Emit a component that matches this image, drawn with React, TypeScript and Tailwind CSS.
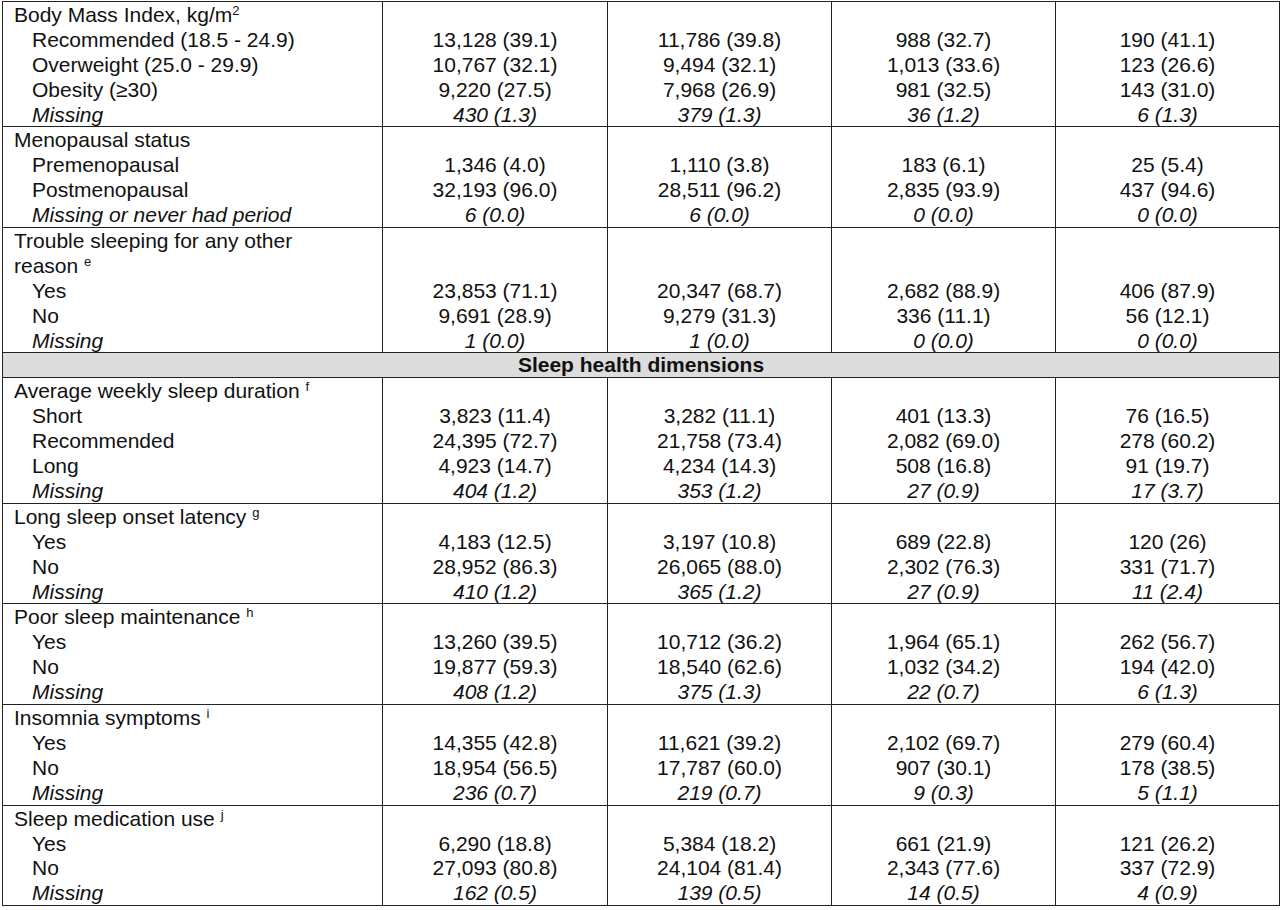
type Row = { label: string; values: string[]; missing?: boolean };
type Section = { title: React.ReactNode[]; rows: Row[] };

const Sup = ({ c }: { c: string }) => (
  <span className="align-[7px] text-[13px] leading-none">{c}</span>
);

const sections: Section[] = [
  {
    title: [
      <>
        Body Mass Index, kg/m<Sup c="2" />
      </>,
    ],
    rows: [
      { label: "Recommended (18.5 - 24.9)", values: ["13,128 (39.1)", "11,786 (39.8)", "988 (32.7)", "190 (41.1)"] },
      { label: "Overweight (25.0 - 29.9)", values: ["10,767 (32.1)", "9,494 (32.1)", "1,013 (33.6)", "123 (26.6)"] },
      { label: "Obesity (≥30)", values: ["9,220 (27.5)", "7,968 (26.9)", "981 (32.5)", "143 (31.0)"] },
      { label: "Missing", values: ["430 (1.3)", "379 (1.3)", "36 (1.2)", "6 (1.3)"], missing: true },
    ],
  },
  {
    title: ["Menopausal status"],
    rows: [
      { label: "Premenopausal", values: ["1,346 (4.0)", "1,110 (3.8)", "183 (6.1)", "25 (5.4)"] },
      { label: "Postmenopausal", values: ["32,193 (96.0)", "28,511 (96.2)", "2,835 (93.9)", "437 (94.6)"] },
      { label: "Missing or never had period", values: ["6 (0.0)", "6 (0.0)", "0 (0.0)", "0 (0.0)"], missing: true },
    ],
  },
  {
    title: [
      "Trouble sleeping for any other",
      <>
        reason <Sup c="e" />
      </>,
    ],
    rows: [
      { label: "Yes", values: ["23,853 (71.1)", "20,347 (68.7)", "2,682 (88.9)", "406 (87.9)"] },
      { label: "No", values: ["9,691 (28.9)", "9,279 (31.3)", "336 (11.1)", "56 (12.1)"] },
      { label: "Missing", values: ["1 (0.0)", "1 (0.0)", "0 (0.0)", "0 (0.0)"], missing: true },
    ],
  },
];

const sleep: Section[] = [
  {
    title: [
      <>
        Average weekly sleep duration <Sup c="f" />
      </>,
    ],
    rows: [
      { label: "Short", values: ["3,823 (11.4)", "3,282 (11.1)", "401 (13.3)", "76 (16.5)"] },
      { label: "Recommended", values: ["24,395 (72.7)", "21,758 (73.4)", "2,082 (69.0)", "278 (60.2)"] },
      { label: "Long", values: ["4,923 (14.7)", "4,234 (14.3)", "508 (16.8)", "91 (19.7)"] },
      { label: "Missing", values: ["404 (1.2)", "353 (1.2)", "27 (0.9)", "17 (3.7)"], missing: true },
    ],
  },
  {
    title: [
      <>
        Long sleep onset latency <Sup c="g" />
      </>,
    ],
    rows: [
      { label: "Yes", values: ["4,183 (12.5)", "3,197 (10.8)", "689 (22.8)", "120 (26)"] },
      { label: "No", values: ["28,952 (86.3)", "26,065 (88.0)", "2,302 (76.3)", "331 (71.7)"] },
      { label: "Missing", values: ["410 (1.2)", "365 (1.2)", "27 (0.9)", "11 (2.4)"], missing: true },
    ],
  },
  {
    title: [
      <>
        Poor sleep maintenance <Sup c="h" />
      </>,
    ],
    rows: [
      { label: "Yes", values: ["13,260 (39.5)", "10,712 (36.2)", "1,964 (65.1)", "262 (56.7)"] },
      { label: "No", values: ["19,877 (59.3)", "18,540 (62.6)", "1,032 (34.2)", "194 (42.0)"] },
      { label: "Missing", values: ["408 (1.2)", "375 (1.3)", "22 (0.7)", "6 (1.3)"], missing: true },
    ],
  },
  {
    title: [
      <>
        Insomnia symptoms <Sup c="i" />
      </>,
    ],
    rows: [
      { label: "Yes", values: ["14,355 (42.8)", "11,621 (39.2)", "2,102 (69.7)", "279 (60.4)"] },
      { label: "No", values: ["18,954 (56.5)", "17,787 (60.0)", "907 (30.1)", "178 (38.5)"] },
      { label: "Missing", values: ["236 (0.7)", "219 (0.7)", "9 (0.3)", "5 (1.1)"], missing: true },
    ],
  },
  {
    title: [
      <>
        Sleep medication use <Sup c="j" />
      </>,
    ],
    rows: [
      { label: "Yes", values: ["6,290 (18.8)", "5,384 (18.2)", "661 (21.9)", "121 (26.2)"] },
      { label: "No", values: ["27,093 (80.8)", "24,104 (81.4)", "2,343 (77.6)", "337 (72.9)"] },
      { label: "Missing", values: ["162 (0.5)", "139 (0.5)", "14 (0.5)", "4 (0.9)"], missing: true },
    ],
  },
];

const cell = "border border-[#222] p-0 align-top";
const line = "h-[24.9px] whitespace-nowrap";

function SectionRows({ s }: { s: Section }) {
  return (
    <tr>
      <td className={`${cell} pl-[11px]`}>
        {s.title.map((t, i) => (
          <div key={i} className={line}>
            {t}
          </div>
        ))}
        {s.rows.map((r) => (
          <div key={r.label} className={`${line} pl-[18px] ${r.missing ? "italic" : ""}`}>
            {r.label}
          </div>
        ))}
      </td>
      {[0, 1, 2, 3].map((c) => (
        <td key={c} className={`${cell} text-center`}>
          {s.title.map((_, i) => (
            <div key={i} className={line} />
          ))}
          {s.rows.map((r) => (
            <div key={r.label} className={`${line} ${r.missing ? "italic" : ""}`}>
              {r.values[c]}
            </div>
          ))}
        </td>
      ))}
    </tr>
  );
}

export default function App() {
  return (
    <div className="min-h-[910px] w-[1280px] bg-white pl-[2px] pt-[1px] font-['Liberation_Sans',Arial,sans-serif] text-[21px] leading-[25px] text-[#111]">
      <table className="w-[1277px] table-fixed border-collapse">
        <colgroup>
          <col className="w-[380px]" />
          <col className="w-[225px]" />
          <col className="w-[224px]" />
          <col className="w-[224px]" />
          <col className="w-[224px]" />
        </colgroup>
        <tbody>
          {sections.map((s, i) => (
            <SectionRows key={i} s={s} />
          ))}
          <tr>
            <td colSpan={5} className={`${cell} h-[24.9px] bg-[#dcdcdc] text-center font-bold leading-[24px]`}>
              Sleep health dimensions
            </td>
          </tr>
          {sleep.map((s, i) => (
            <SectionRows key={i} s={s} />
          ))}
        </tbody>
      </table>
    </div>
  );
}
